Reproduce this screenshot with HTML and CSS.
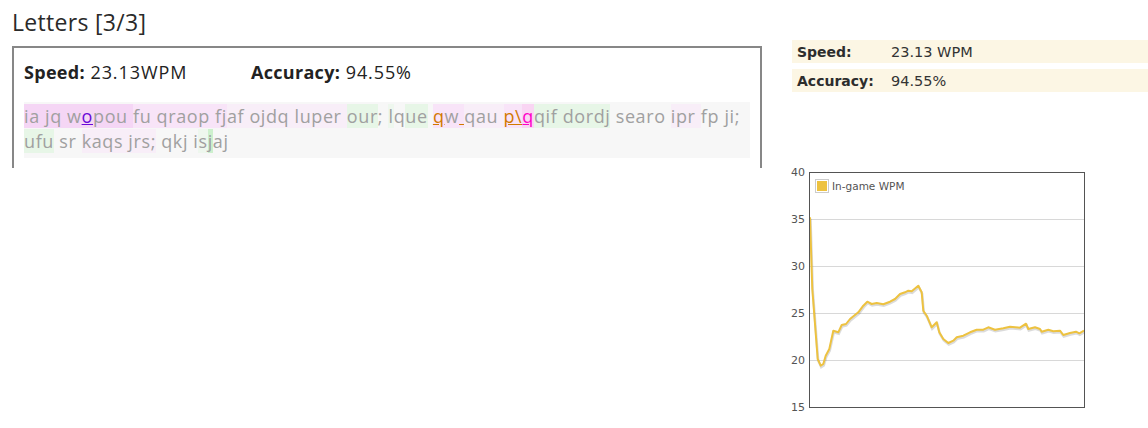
FILE: index.html
```html
<!DOCTYPE html>
<html>
<head>
<meta charset="utf-8">
<link rel="stylesheet" href="styles.css">
</head>
<body>
<div class="page">
  <div class="left">
    <h1 class="title">Letters [3/3]</h1>
    <div class="result-box">
      <div class="stats">
        <span class="stat"><b>Speed:</b> 23.13WPM</span>
        <span class="stat"><b>Accuracy:</b> 94.55%</span>
      </div>
      <div class="typed">
        <div class="line"><span class="p2">ia jq w</span><span class="p2 err-purple">o</span><span class="p2">pou </span><span class="p1">fu qraop fj</span><span class="p0">af ojdq luper </span><span class="g1">our</span>; <span class="g0">l</span>q<span class="g1">ue</span> <span class="p1 err-orange">q</span><span class="p1">w</span><span class="p1 err-orange"> </span><span class="p0">qau </span><span class="p1 err-orange">p\</span><span class="p1 err-pink">q</span><span class="g1">qif </span><span class="g1">dordj</span> searo <span class="p0">ipr </span>fp ji;</div>
        <div class="line"><span class="g1">ufu</span> sr <span class="p0">kaqs jrs;</span> qkj i<span class="g0">s</span><span class="g2">j</span>aj</div>
      </div>
    </div>
  </div>
  <div class="right">
    <div class="summary">
      <div class="sum-row"><span class="sum-label">Speed:</span><span class="sum-value">23.13 WPM</span></div>
      <div class="sum-row"><span class="sum-label">Accuracy:</span><span class="sum-value">94.55%</span></div>
    </div>
    <div class="chart">
      <svg class="chart-svg" width="300" height="256" viewBox="790 165 300 256">
        <g class="grid">
          <line x1="810" y1="220.5" x2="1084" y2="220.5"/>
          <line x1="810" y1="267.5" x2="1084" y2="267.5"/>
          <line x1="810" y1="314.5" x2="1084" y2="314.5"/>
          <line x1="810" y1="361.5" x2="1084" y2="361.5"/>
        </g>
        <g class="ylabels">
          <text x="805" y="177">40</text>
          <text x="805" y="224">35</text>
          <text x="805" y="271">30</text>
          <text x="805" y="318">25</text>
          <text x="805" y="365">20</text>
          <text x="805" y="412">15</text>
        </g>
        <polyline class="shadow" points="810,218.3 812.3,290 817.7,360 820.7,366.7 823.3,365 825.7,356.7 829.3,350 833.3,331.7 838.3,333.3 841.7,326 846,325 850,320 858.3,313.3 863.3,306.7 867.3,302.7 871.7,305 876.7,304 883.3,305.3 890,302.7 895,300 900,295 905,293.3 908.3,291.7 911.7,292.3 918.3,286.7 921.7,293.3 923.3,311.7 926.7,316.7 931.7,328.3 936.7,323.3 939.3,333.3 943.3,340 948.3,344 953.3,341.7 956.7,338.3 963.3,336.7 970,333.3 976.7,330.7 983.3,330.7 988.3,328.3 995,330.7 1003.3,329.3 1010,327.7 1020,328.7 1026,324.7 1028.3,330 1035,328.3 1040,330 1041.7,332.7 1048.3,330.7 1053.3,332.3 1060,331.7 1063.3,336 1070,334 1076,332.7 1079.3,334.3 1084,331.7"/>
        <polyline class="series" points="810,218.3 812.3,290 817.7,360 820.7,366.7 823.3,365 825.7,356.7 829.3,350 833.3,331.7 838.3,333.3 841.7,326 846,325 850,320 858.3,313.3 863.3,306.7 867.3,302.7 871.7,305 876.7,304 883.3,305.3 890,302.7 895,300 900,295 905,293.3 908.3,291.7 911.7,292.3 918.3,286.7 921.7,293.3 923.3,311.7 926.7,316.7 931.7,328.3 936.7,323.3 939.3,333.3 943.3,340 948.3,344 953.3,341.7 956.7,338.3 963.3,336.7 970,333.3 976.7,330.7 983.3,330.7 988.3,328.3 995,330.7 1003.3,329.3 1010,327.7 1020,328.7 1026,324.7 1028.3,330 1035,328.3 1040,330 1041.7,332.7 1048.3,330.7 1053.3,332.3 1060,331.7 1063.3,336 1070,334 1076,332.7 1079.3,334.3 1084,331.7"/>
        <rect class="frame" x="809.5" y="173.5" width="275" height="235"/>
        <rect class="legend-box" x="815.5" y="180.5" width="13" height="13"/>
        <rect class="legend-swatch" x="817" y="182" width="10" height="10"/>
        <text class="legend-text" x="832" y="191">In-game WPM</text>
      </svg>
    </div>
  </div>
</div>
</body>
</html>
```

FILE: styles.css
```css
html, body {
  margin: 0;
  padding: 0;
  background: #fff;
}
.page {
  display: flex;
  align-items: flex-start;
  gap: 30px;
  font-family: "Open Sans", "Noto Sans", sans-serif;
  color: #222;
}
.left {
  width: 750px;
  padding-left: 12px;
}
.title {
  margin: 0;
  padding-top: 6px;
  font-size: 23px;
  font-weight: 400;
  letter-spacing: 0.3px;
  line-height: 32px;
  color: #2a2a2a;
}
.result-box {
  margin-top: 8px;
  border: 2px solid #878787;
  border-bottom: none;
  height: 122px;
  padding: 12px 10px 0 10px;
  box-sizing: border-box;
}
.stats {
  display: flex;
  font-size: 18px;
  letter-spacing: 0.9px;
  line-height: 24px;
  height: 24px;
}
.stat b {
  font-weight: 700;
  letter-spacing: 0.3px;
}
.stat:first-child {
  width: 227px;
}
.typed {
  margin-top: 18px;
  background: #f7f7f7;
  padding: 2px 0 4px 0;
  font-size: 18px;
  letter-spacing: 0.6px;
  line-height: 25px;
  color: #a0a0a0;
  width: 726px;
}
.line {
  white-space: nowrap;
}
.p2 { background: #f5d6f5; }
.p1 { background: #f8e4f8; }
.p0 { background: #f8eef8; }
.g0 { background: #eef7ee; }
.g1 { background: #e7f6e7; }
.g2 { background: #cdf0cd; }
.err-purple { color: #6a0ad8; text-decoration: underline; }
.err-orange { color: #d27a00; text-decoration: underline; }
.err-pink { color: #ff00c8; text-decoration: underline; background: #f9d5f3; }

.right {
  width: 356px;
  padding-top: 40px;
}
.summary {
  display: flex;
  flex-direction: column;
  gap: 6px;
  font-family: "DejaVu Sans", sans-serif;
  font-size: 14.5px;
  color: #333;
}
.sum-row {
  display: flex;
  align-items: center;
  height: 23px;
  background: #fcf6e4;
  padding-left: 5px;
}
.sum-label {
  width: 94px;
  font-weight: 700;
  font-size: 14px;
  color: #2d2d2d;
}
.chart {
  margin-top: 72px;
  margin-left: -2px;
}
.chart-svg {
  display: block;
  font-family: "DejaVu Sans", sans-serif;
}
.grid line {
  stroke: #d8d8d8;
  stroke-width: 1;
}
.ylabels text {
  font-size: 11px;
  fill: #545454;
  text-anchor: end;
}
.frame {
  fill: none;
  stroke: #545454;
  stroke-width: 1;
}
.series {
  fill: none;
  stroke: #edc240;
  stroke-width: 2;
  stroke-linejoin: round;
}
.shadow {
  fill: none;
  stroke: rgba(0,0,0,0.14);
  stroke-width: 2.5;
  transform: translate(0.5px, 1.5px);
}
.legend-box {
  fill: #fff;
  stroke: #cccccc;
  stroke-width: 1;
}
.legend-swatch {
  fill: #edc240;
}
.legend-text {
  font-size: 10.5px;
  fill: #545454;
}
```
